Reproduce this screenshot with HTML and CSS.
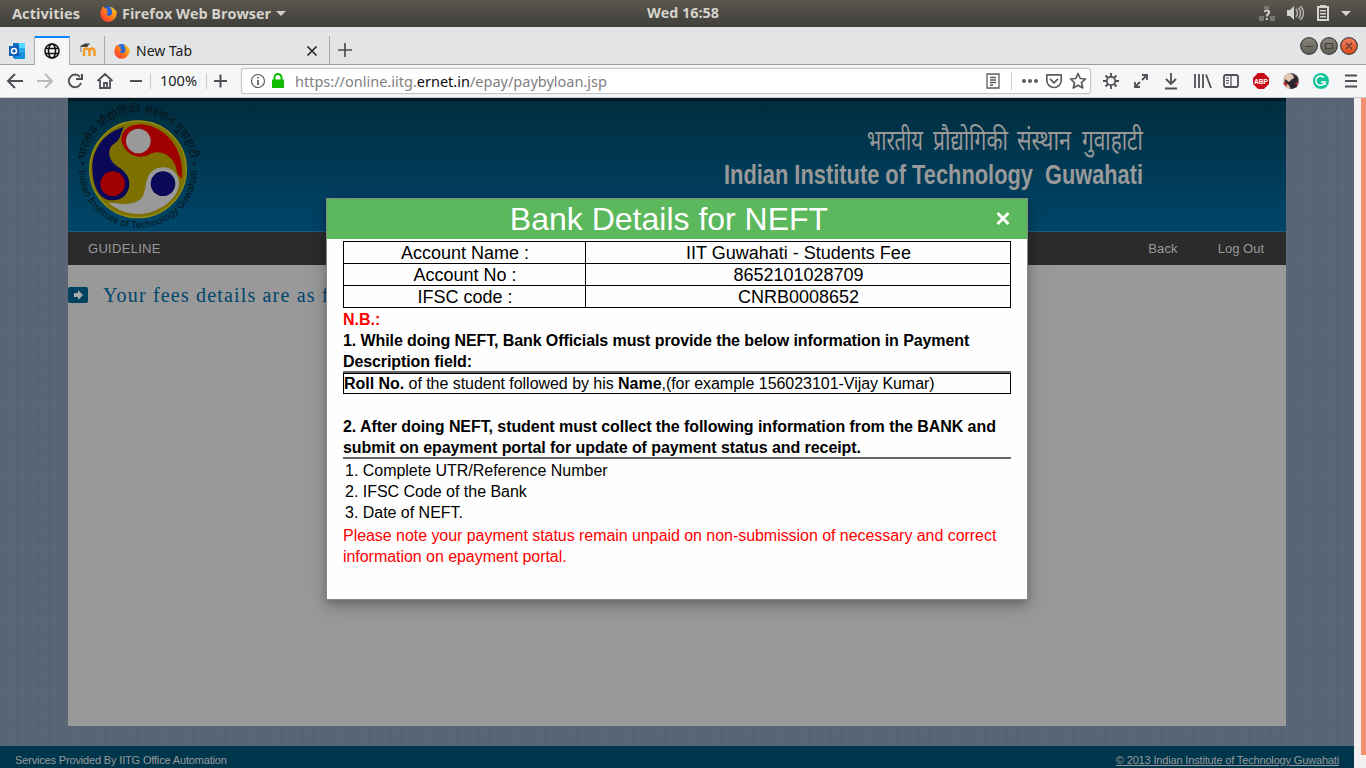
FILE: index.html
```
<!DOCTYPE html>
<html lang="en">
<head>
<meta charset="utf-8">
<title>Bank Details for NEFT</title>
<link rel="stylesheet" href="styles.css">
</head>
<body>
<svg width="0" height="0" class="defs">
  <defs>
    <linearGradient id="flame" x1="0" y1="1" x2="1" y2="0"><stop offset="0" stop-color="#ff2a3d"/><stop offset=".5" stop-color="#ff7a18"/><stop offset="1" stop-color="#ffe02a"/></linearGradient>
    <symbol id="firefox" viewBox="0 0 16 16">
      <circle cx="8" cy="7.7" r="6.6" fill="#2463d8"/>
      <path d="M3 1.2 4.6 3.4 7 3.2 6 5.5 8 6.8 6.2 8.2C6.6 10.8 9.7 10.8 11 8.8 12 7 11.5 4.3 9.2 1.6 13 2.6 14 4 14 5.3L15 4.6C17 9.4 13.7 15.7 8 15.8 3 15.8.3 12 .4 8 .5 5 1.7 3.3 3 1.2Z" fill="url(#flame)"/>
    </symbol>
  </defs>
</svg>
<header class="topbar">
  <svg width="300" height="27">
    <g class="shell-text"><text x="12" y="18.5" textLength="68" lengthAdjust="spacingAndGlyphs">Activities</text>
    <text x="122" y="18.5" textLength="149" lengthAdjust="spacingAndGlyphs">Firefox Web Browser</text></g>
    <use href="#firefox" x="100" y="5" width="17" height="17"/>
    <path d="M276 11h10l-5 5z" fill="#d0cec8"/>
  </svg>
  <svg width="80" height="27"><text class="shell-text" x="4" y="18" textLength="72" lengthAdjust="spacingAndGlyphs">Wed 16:58</text></svg>
  <svg width="110" height="27" fill="#d5d3ce">
    <g fill="#797771"><path d="M8 6h5v3H8zM3 16h5v5H3zM14 16h5v5h-5z"/></g>
    <path d="M8.3 11.7Q10.7 9.2 13 11.5C14 14 10.8 13.8 10.8 16.5M10.8 18v2" fill="none" stroke="#d5d3ce" stroke-width="2"/>
    <path d="M31 10h3l4-4v14l-4-4h-3z"/><path d="M40 9q3 4 0 8M42.500 7.500q4 5.500 0 11M44.500 6q6 7 0 14" fill="none" stroke="#b9b7b1" stroke-width="1.400"/>
    <path d="M62 7h10v13H62zM64 6h6" fill="none" stroke="#d5d3ce" stroke-width="2"/><path d="M64 10h6v1.500h-6zM64 13h6v1.500h-6zM64 16h6v1.500h-6z"/>
    <path d="M85 11h10l-5 5z"/>
  </svg>
</header>
<div class="tabs">
  <div class="tab pinned"><svg width="16" height="16"><path d="M4 0h12v15H4z" fill="#1670c8"/><path d="M10 0h6v5h-6z" fill="#50d9ff"/><path d="M10 5h6v5h-6z" fill="#28a8ea"/><path d="m5 15 11-7v8H5z" fill="#1490df"/><path d="M0 3h10v10H0z" fill="#0f5fb5"/><circle cx="5" cy="8" r="2.500" fill="none" stroke="#fff" stroke-width="1.500"/></svg></div>
  <div class="tab pinned active"><svg width="16" height="16" fill="none" stroke="#161616" stroke-width="1.600"><circle cx="8" cy="8" r="7"/><ellipse cx="8" cy="8" rx="3.500" ry="7"/><path d="M1.500 5.500h13M1.500 10.500h13"/></svg></div>
  <div class="tab pinned moodle"><svg width="16" height="16"><path d="M4 13V8Q4 5.500 6.500 5.500T9.500 8V13M9.500 8Q10 5.500 12 5.500T14.500 8V13" fill="none" stroke="#f19a25" stroke-width="2.500"/><path d="M0 3 5 0.500h5L7 4 2 4z" fill="#44403c"/><path d="M1 3v6" stroke="#777"/></svg></div>
  <div class="tab newtab"><svg width="224" height="36"><use href="#firefox" x="9" y="7" width="16" height="16"/><text class="ui" x="31" y="20" textLength="56" lengthAdjust="spacingAndGlyphs">New Tab</text><path d="m202.500 10.500 9 9m0-9-9 9" stroke="#222" stroke-width="1.600"/></svg></div>
  <svg class="plus" width="30" height="36"><path d="M15 7v14M8 14h14" stroke="#4c4c4f" stroke-width="1.700"/></svg>
  <div class="window-buttons">
    <svg width="58" height="20"><defs><linearGradient id="knob" x2="0" y2="1"><stop stop-color="#8a877e"/><stop offset="1" stop-color="#5f5d55"/></linearGradient><linearGradient id="close" x2="0" y2="1"><stop stop-color="#f58060"/><stop offset="1" stop-color="#dd4918"/></linearGradient></defs><g stroke="#403f3b" stroke-width="1.200"><circle cx="9" cy="10" r="8.300" fill="url(#knob)"/><circle cx="29" cy="10" r="8.300" fill="url(#knob)"/><circle cx="49" cy="10" r="8.300" fill="url(#close)"/><path d="M5 10.500h8M25.500 7.500h7v5h-7zM46 7l6 6m0-6-6 6" fill="none"/></g></svg>
  </div>
</div>
<div class="toolbar">
  <svg width="241" height="32" fill="none" stroke="#505054" stroke-width="2">
    <path d="M23 16H8m7-7-7 7 7 7"/><path d="M37 16h15m-7-7 7 7-7 7" stroke="#b8b9bb"/>
    <path d="M80 12A6.300 6.300 0 1 0 81 18M82 9v5h-6"/>
    <path d="m97.500 16 7.500-7 7.500 7M100 15v8h10v-8M104 23v-5h3v5" stroke-width="1.800"/>
    <path d="M130 16h12M214 16h13m-6.500-6.500v13"/><path d="M150.500 8v16M206.500 8v16" stroke="#c9cacc" stroke-width="1"/>
    <text class="ui" stroke="none" x="160" y="21" textLength="37" lengthAdjust="spacingAndGlyphs">100%</text>
  </svg>
  <div class="urlbar">
    <svg width="848" height="24" fill="none" stroke="#5c5c60" stroke-width="1.700">
      <circle cx="16" cy="12" r="6.500" stroke-width="1.200"/><path d="M16 11v5M16 8v1.500"/><path d="M32.500 11V8.500a3.500 3.500 0 0 1 7 0V11" stroke="#12bc00" stroke-width="2"/><path d="M30 10.500h12V19H30z" fill="#12bc00" stroke="none"/>
      <text class="url" stroke="none" x="53" y="17.500" textLength="312" lengthAdjust="spacingAndGlyphs">https://online.iitg.<tspan>ernet.in</tspan>/epay/paybyloan.jsp</text>
      <path d="M745 5h12v14h-12zM748 8.500h6M748 11h6M748 13.500h6M748 16h3" stroke-width="1.300"/><path d="M769.500 3v18" stroke="#c9cacc" stroke-width="1"/>
      <g fill="#5c5c60" stroke="none"><circle cx="782" cy="12" r="2"/><circle cx="788" cy="12" r="2"/><circle cx="794" cy="12" r="2"/></g>
      <path d="M804.800 5.800h14.400v5.500a7.200 7.200 0 0 1-14.400 0zM808 9.800l4 4 4-4" stroke-linejoin="round"/><path d="m836 4.500 2.200 5 5.300.5-4 3.700 1.200 5.300-4.700-2.800-4.700 2.800 1.200-5.300-4-3.700 5.300-.5z" stroke-linejoin="round"/>
    </svg>
  </div>
  <svg class="tool-icons" width="274" height="32" fill="none" stroke="#505054" stroke-width="1.800">
    <circle cx="19" cy="16" r="4.200"/><path d="M19 8v4m0 8v4m-8-8h4m8 0h4M13.500 10.500l2.500 2.500m6 6 2.500 2.500m0-11L22 13m-6 6-2.500 2.500"/>
    <path d="M43.500 21.500 48 17m2-2 4.500-4.500M50 10h5v5M48 22h-5v-5"/><path d="M79 8v11m-5-5 5 5 5-5M73 23.500h12"/>
    <path d="M103 9v14m4-14v14m4-14v14m3-13.500 5 13.500"/><rect x="132" y="10" width="14" height="12" rx="2"/><path d="M139 10v12M134 13h3m-3 2.500h3M134 18h3" stroke-width="1.200"/>
    <path d="M166 8h6l5 5v6l-5 5h-6l-5-5v-6z" fill="#c70d17" stroke="none"/><text class="abp" x="162" y="19" textLength="14" lengthAdjust="spacingAndGlyphs">ABP</text>
    <g stroke="none"><circle cx="199" cy="16" r="8" fill="#766268"/><path d="M191 16q0-7 7-8l4 4-3 5 4 4-6 3q-7-2-6-8z" fill="#dfc9b5"/><path d="m193 14 4 3 3-3 6-2-1 10-6 2-3-5-4 1zM201 9l4 3-2 2z" fill="#2d252c"/><path d="m191 18 4-1v5zM203 18l3-1-1 4z" fill="#b92c36"/></g>
    <circle cx="229" cy="16" r="8" fill="#15c39a" stroke="none"/><path d="M232 12.500A4.700 4.700 0 1 0 233 17h-4m4 0v3" stroke="#fff" stroke-width="1.500"/>
    <path d="M253 10.500h12M253 16h12M253 21.500h12"/>
  </svg>
</div>
<main class="viewport">
  <div class="page">
    <div class="site">
      <div class="banner">
        <svg class="crest" width="152" height="133" viewBox="24 9 456 399">
          <defs><path id="upper" d="M75 213A159 159 0 0 1 393 213"/><path id="lower" d="M57 222A177 177 0 0 0 411 222"/></defs>
          <circle cx="234" cy="223" r="145" fill="#7d7000" stroke="#92900f" stroke-width="4"/>
          <path d="M192 96C130 113 95 165 97 224 100 283 121 316 158 316 187 316 208 295 208 266 208 241 190 225 170 213 142 192 140 160 164 145 184 132 181 114 192 96Z" fill="#0b0759"/>
          <path d="M184 138C184 102 211 88 245 88 320 95 374 165 366 250 350 242 351 223 344 207 330 177 299 164 272 176 248 193 199 189 184 138Z" fill="#9f0000"/>
          <path d="M309 217C337 217 357 238 357 266 357 309 296 356 237 357 200 357 168 343 145 323 176 323 189 331 214 325 260 314 250 289 262 251 268 231 287 217 309 217Z" fill="#999"/>
          <circle cx="235" cy="138" r="37" fill="#999"/><circle cx="158" cy="266" r="37" fill="#9f0000"/><circle cx="309" cy="266" r="37" fill="#0b0759"/>
          <g class="crest-text"><circle cx="68" cy="205" r="4"/><circle cx="402" cy="206" r="4"/><text font-size="35"><textPath href="#upper" startOffset="18" textLength="458" lengthAdjust="spacing">भारतीय प्रौद्योगिकी संस्थान गुवाहाटी</textPath></text><text font-size="28"><textPath href="#lower" startOffset="2" textLength="550" lengthAdjust="spacing">Indian Institute of Technology Guwahati</textPath></text></g>
        </svg>
        <svg class="wordmark" width="430" height="90">
          <g class="hindi"><text x="149" y="40" textLength="56" lengthAdjust="spacingAndGlyphs">भारतीय</text><text x="215" y="40" textLength="75" lengthAdjust="spacingAndGlyphs">प्रौद्योगिकी</text><text x="299" y="40" textLength="54" lengthAdjust="spacingAndGlyphs">संस्थान</text><text x="364" y="40" textLength="61" lengthAdjust="spacingAndGlyphs">गुवाहाटी</text></g>
          <text class="english" x="6" y="74" textLength="309" lengthAdjust="spacingAndGlyphs">Indian Institute of Technology</text><text class="english" x="327" y="74" textLength="98" lengthAdjust="spacingAndGlyphs">Guwahati</text>
        </svg>
      </div>
      <nav class="menu"><span class="guideline">GUIDELINE</span><span class="back">Back</span><span>Log Out</span></nav>
      <section class="content"><svg width="20" height="16"><rect width="20" height="16" rx="2" fill="#00425f"/><path d="M6 6h4V3l5 5-5 5v-3H6z" fill="#aaa"/></svg><h2>Your fees details are as follows</h2></section>
    </div>
    <footer><span>Services Provided By IITG Office Automation</span><a>© 2013 Indian Institute of Technology Guwahati</a></footer>
    <section class="modal">
      <header><h1>Bank Details for NEFT</h1><svg width="16" height="16"><path d="m2.500 2 11 11m0-11-11 11" stroke="#fff" stroke-width="3"/></svg></header>
      <div class="modal-body">
        <table><tr><td>Account Name :</td><td>IIT Guwahati - Students Fee</td></tr><tr><td>Account No :</td><td>8652101028709</td></tr><tr><td>IFSC code :</td><td>CNRB0008652</td></tr></table>
        <div class="note red">N.B.:</div>
        <div class="note underlined first">1. While doing NEFT, Bank Officials must provide the below information in Payment<br>Description field:</div>
        <div class="example"><b>Roll No.</b> of the student followed by his <b>Name</b>,(for example 156023101-Vijay Kumar)</div>
        <div class="note underlined second">2. After doing NEFT, student must collect the following information from the BANK and<br>submit on epayment portal for update of payment status and receipt.</div>
        <div class="steps"><div>1. Complete UTR/Reference Number</div><div>2. IFSC Code of the Bank</div><div>3. Date of NEFT.</div></div>
        <p class="red">Please note your payment status remain unpaid on non-submission of necessary and correct<br>information on epayment portal.</p>
      </div>
    </section>
  </div>
  <div class="scrollbar"><div class="thumb"></div></div>
</main>
</body>
</html>
```
FILE: styles.css
```
* { box-sizing: border-box; }
body { margin: 0; width: 1366px; height: 768px; overflow: hidden; font-family: "Liberation Sans", Arial, sans-serif; }
svg { display: block; flex: none; }
.defs { position: absolute; }
.topbar { height: 27px; display: grid; grid-template-columns: 643px 613px 110px; background: linear-gradient(#5a574f, #403f3a); }
.shell-text { font: 700 13.5px "Open Sans", "Noto Sans", sans-serif; fill: #d6d3cc; }
.tabs { height: 38px; display: flex; background: #e2e4e6; padding-top: 9px; border-bottom: 1px solid #9b9da0; }
.tab { height: 29px; border-right: 1px solid #a9abad; }
.pinned { width: 35px; padding: 7px 0 0 9px; }
.pinned.active { background: #f5f6f7; border-top: 2px solid #0a84ff; padding-top: 5px; }
.moodle { padding-left: 10px; }
.newtab { width: 225px; }
.newtab svg, .plus { height: 28px; }
.ui { font: 14.5px "Noto Sans", "Open Sans", sans-serif; fill: #1a1a1a; }
.window-buttons { margin-left: auto; padding-right: 8px; }
.toolbar { height: 33px; display: flex; background: #f5f6f7; border-bottom: 1px solid #c8c9cb; }
.urlbar { width: 850px; height: 26px; margin-top: 3px; background: #fff; border: 1px solid #c4c5c7; border-radius: 3px; box-shadow: 0 0 1px #bbb; }
.url { font: 15px "Noto Sans", "Open Sans", sans-serif; fill: #808083; }
.url tspan { fill: #0c0c0d; }
.tool-icons { margin-left: 1px; }
.abp { font: bold 8px "Liberation Sans", sans-serif; fill: #fff; stroke: none; }
.viewport { height: 670px; display: flex; }
.page { position: relative; width: 1354px; height: 670px; background-color: #596475; background-image: repeating-linear-gradient(90deg, rgba(130,145,170,.07) 0 1px, transparent 1px 5px, rgba(35,45,65,.05) 5px 6px, transparent 6px 11px), repeating-linear-gradient(rgba(130,145,170,.06) 0 1px, transparent 1px 4px, rgba(35,45,65,.05) 4px 5px, transparent 5px 9px); }
.scrollbar { width: 12px; padding-left: 7px; background: #f2f1f0; }
.thumb { height: 657px; background: #f0906c; }
.site { width: 1218px; height: 628px; margin-left: 68px; background: #999; }
.banner { height: 134px; display: flex; justify-content: space-between; border-top: 3px solid #001922; border-bottom: 1px solid #23587a; background: linear-gradient(#002d3e, #00466a); }
.crest { margin-top: -3px; overflow: visible; }
.crest-text { fill: #081318; font-family: "Noto Sans", "Open Sans", sans-serif; }
.wordmark { margin: 9px 138px 0 0; overflow: visible; }
.hindi { font: 29px "Noto Sans", sans-serif; fill: #999; }
.english { font: bold 28px "Liberation Sans", sans-serif; fill: #999; }
.menu { height: 33px; background: #2b2b2b; color: #999; font-size: 13px; line-height: 33px; display: flex; padding: 0 22px 0 20px; }
.guideline { letter-spacing: .3px; }
.menu .back { margin: 0 40px 0 auto; letter-spacing: .15px; }
.content { display: flex; padding-top: 22px; }
.content h2 { width: 240px; overflow: hidden; white-space: nowrap; margin: -4px 0 0 15px; font: 20px/24px "Liberation Serif", serif; letter-spacing: 1.17px; color: #00456b; }
.page footer { height: 22px; margin-top: 20px; padding: 8px 15px 0; background: #00364c; display: flex; justify-content: space-between; color: #999; font-size: 11px; line-height: 13px; letter-spacing: -.16px; }
footer a { text-decoration: underline; }
.modal { position: absolute; left: 326px; top: 100px; width: 702px; height: 402px; background: #fefefe; border: 1px solid #888; box-shadow: 0 4px 8px rgba(0,0,0,.2), 0 6px 20px rgba(0,0,0,.19); }
.modal header { height: 40px; background: #5cb85c; display: flex; color: #fff; }
.modal h1 { margin: 0; padding-left: 16px; width: 668px; font: 32px/40px "Liberation Sans", sans-serif; text-align: center; }
.modal header svg { margin-top: 12px; }
.modal-body { padding: 2px 16px; font-size: 16px; line-height: 21px; color: #000; }
table { width: 668px; height: 67px; border-collapse: collapse; table-layout: fixed; text-align: center; font-size: 18px; line-height: 20px; }
td { padding: 1px 0 0 1px; border: 1px solid #000; }
td:first-child { width: 242px; }
.note { font-weight: bold; white-space: nowrap; }
.note.red { margin-top: 1px; }
.red { color: #f00; }
.first { letter-spacing: -.095px; }
.underlined { height: 43px; border-bottom: 2px solid #666; }
.example { height: 21px; line-height: 20px; border: 1px solid #000; white-space: nowrap; letter-spacing: -.04px; }
.second { margin-top: 22px; letter-spacing: -.072px; }
.steps { padding: 1px 0 0 2px; letter-spacing: -.02px; }
.modal p { margin: 2px 0 0; white-space: nowrap; letter-spacing: -.045px; }
```
